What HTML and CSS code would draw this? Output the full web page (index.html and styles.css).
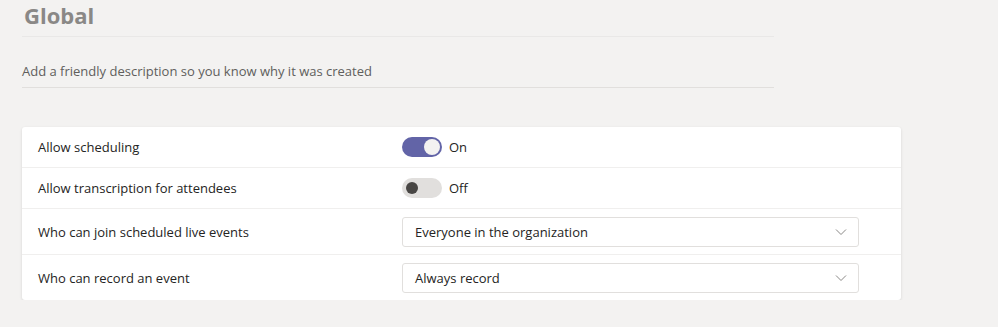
FILE: index.html
```html
<!DOCTYPE html>
<html>
<head>
    <title>Live events policy - Global</title>
    <link rel="stylesheet" href="styles.css">
</head>
<body>
    <div class="header">
        <h1 class="title">Global</h1>
        <div class="desc">Add a friendly description so you know why it was created</div>
    </div>

    <div class="card">
        <div class="row">
            <div class="label">Allow scheduling</div>
            <div class="control">
                <span class="toggle on"><span class="knob"></span></span>
                <span class="state">On</span>
            </div>
        </div>
        <div class="row">
            <div class="label">Allow transcription for attendees</div>
            <div class="control">
                <span class="toggle"><span class="knob"></span></span>
                <span class="state">Off</span>
            </div>
        </div>
        <div class="row tall">
            <div class="label">Who can join scheduled live events</div>
            <div class="control">
                <div class="select">
                    <span>Everyone in the organization</span>
                    <svg class="chev" width="12" height="8" viewBox="0 0 12 8"><path d="M1 1.5 L6 6.5 L11 1.5" fill="none" stroke="#8a8886" stroke-width="1"/></svg>
                </div>
            </div>
        </div>
        <div class="row tall last">
            <div class="label">Who can record an event</div>
            <div class="control">
                <div class="select">
                    <span>Always record</span>
                    <svg class="chev" width="12" height="8" viewBox="0 0 12 8"><path d="M1 1.5 L6 6.5 L11 1.5" fill="none" stroke="#8a8886" stroke-width="1"/></svg>
                </div>
            </div>
        </div>
    </div>
</body>
</html>
```

FILE: styles.css
```css
body { margin: 0; background: #f3f2f1; font-family: "Open Sans", "Noto Sans", sans-serif; color: #252423; font-size: 13px; }
.header { width: 752px; margin-left: 22px; }
.title { margin: 0; padding: 0 0 0 2px; height: 37px; font-size: 22px; line-height: 30px; font-weight: 700; color: #8a8886; border-bottom: 1px solid #e9e8e7; box-sizing: border-box; }
.desc { height: 51px; padding-top: 25px; box-sizing: border-box; font-size: 13px; color: #605e5c; border-bottom: 1px solid #e1dfdd; }
.card { margin: 39px 0 0 22px; width: 879px; background: #fff; border-radius: 3px; box-shadow: 0 1px 3px rgba(0,0,0,0.12); }
.row { display: flex; align-items: center; height: 41px; box-sizing: border-box; border-bottom: 1px solid #f0efee; }
.row.tall { height: 46px; }
.row.last { border-bottom: none; height: 45px; }
.label { width: 380px; box-sizing: border-box; padding-left: 16px; }
.control { display: flex; align-items: center; }
.toggle { width: 40px; height: 20px; border-radius: 10px; background: #e1dfdd; position: relative; box-sizing: border-box; }
.toggle .knob { position: absolute; left: 4px; top: 4px; width: 12px; height: 12px; border-radius: 50%; background: #484644; }
.toggle.on { background: #6264a7; }
.toggle.on .knob { left: 22px; top: 2px; width: 16px; height: 16px; background: #f3f2f1; }
.state { margin-left: 7px; }
.select { width: 457px; height: 30px; box-sizing: border-box; border: 1px solid #e1dfdd; border-radius: 3px; display: flex; align-items: center; justify-content: space-between; padding: 0 11px 0 12px; }
.chev { display: block; }
```
